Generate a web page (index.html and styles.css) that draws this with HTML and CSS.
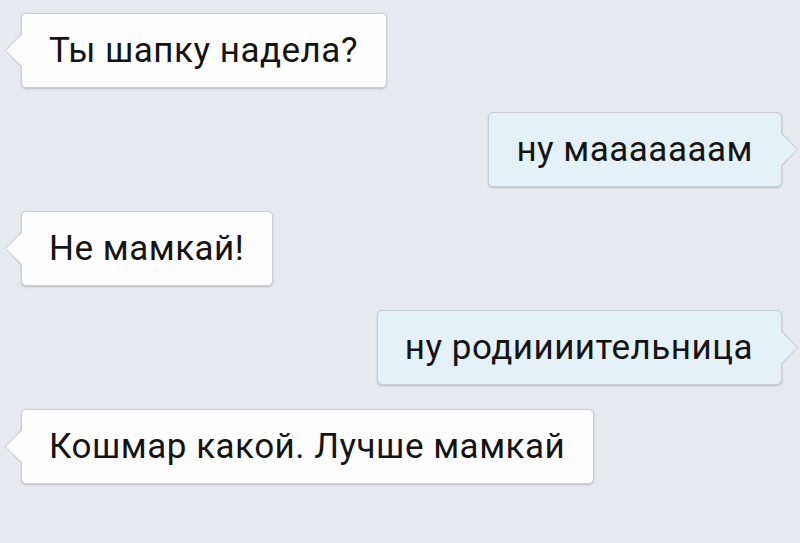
FILE: index.html
```html
<!DOCTYPE html>
<html lang="ru">
  <head>
    <meta charset="UTF-8" />
    <meta name="viewport" content="width=device-width, initial-scale=1.0" />
    <title>Чат</title>
    <link rel="stylesheet" href="styles.css">
  </head>
  <body>
    <div class="chat">
      <div class="msg in">Ты шапку надела?</div>
      <div class="msg out">ну мааааааам</div>
      <div class="msg in">Не мамкай!</div>
      <div class="msg out">ну родиииительница</div>
      <div class="msg in">Кошмар какой. Лучше мамкай</div>
    </div>
  </body>
</html>
```

FILE: styles.css
```css
* {
  margin: 0;
  padding: 0;
  box-sizing: border-box;
}

body {
  background: #e6e9ed;
  font-family: Roboto, "Noto Sans", sans-serif;
  width: 800px;
  height: 543px;
  overflow: hidden;
}

.chat {
  display: flex;
  flex-direction: column;
  gap: 24px;
  padding: 13px 18px 0 21px;
}

.msg {
  position: relative;
  display: flex;
  align-items: center;
  height: 75px;
  padding: 0 28px 1px 27px;
  font-size: 35px;
  letter-spacing: 0.5px;
  color: #141414;
  border: 1px solid #c8cdd3;
  border-radius: 5px;
  box-shadow: 0 1px 2px rgba(0, 0, 0, 0.18);
}

.in {
  align-self: flex-start;
  background: #fdfdfd;
}

.out {
  align-self: flex-end;
  background: #e4f1f8;
}

/* tail: border triangle + fill triangle */
.msg::before,
.msg::after {
  content: "";
  position: absolute;
  top: 50%;
}

.msg::before {
  width: 17px;
  height: 36px;
  margin-top: -18px;
  background: #c8cdd3;
}

.msg::after {
  width: 17px;
  height: 34px;
  margin-top: -17px;
}

.in::before {
  left: -17px;
  clip-path: polygon(100% 0, 0 50%, 100% 100%);
}

.in::after {
  left: -16px;
  background: #fdfdfd;
  clip-path: polygon(100% 0, 0 50%, 100% 100%);
}

.out::before {
  right: -17px;
  clip-path: polygon(0 0, 100% 50%, 0 100%);
}

.out::after {
  right: -16px;
  background: #e4f1f8;
  clip-path: polygon(0 0, 100% 50%, 0 100%);
}
```
